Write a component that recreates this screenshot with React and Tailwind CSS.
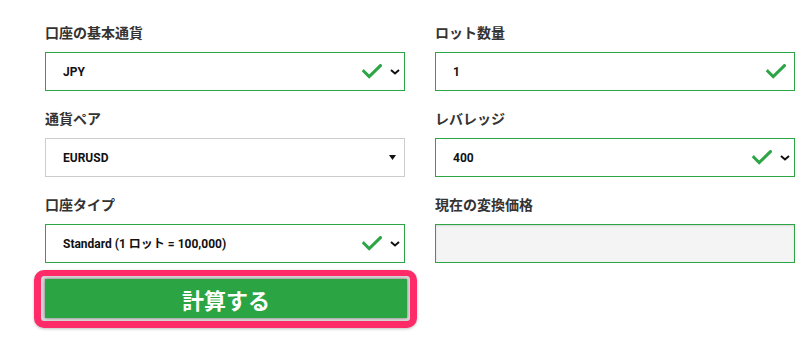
import { useState } from "react"

const labelCls =
	"block text-sm leading-5 font-bold text-[#333] mb-[10px] [font-family:'Noto_Sans_CJK_JP',sans-serif]"
const valueCls =
	"text-[12px] font-bold text-[#111] [font-family:Roboto,'Noto_Sans_CJK_JP',sans-serif]"

function Check() {
	return (
		<svg width="20" height="15" viewBox="0 0 20 15" fill="none" aria-hidden="true">
			<path
				d="M1.8 7.2l5.4 5.4L18.4 1.6"
				stroke="#2ca544"
				strokeWidth="3"
				strokeLinecap="square"
			/>
		</svg>
	)
}

function Chevron() {
	return (
		<svg width="10" height="6" viewBox="0 0 10 6" fill="none" aria-hidden="true">
			<path d="M1 1l4 3.5L9 1" stroke="#111" strokeWidth="2" />
		</svg>
	)
}

function Caret() {
	return (
		<svg width="7" height="5" viewBox="0 0 7 5" aria-hidden="true">
			<path d="M0 0h7L3.5 5z" fill="#111" />
		</svg>
	)
}

function Field({ label, children, className = "" }) {
	return (
		<div className="mb-[17px]">
			<span className={labelCls}>{label}</span>
			<div className={`h-[39px] flex items-center pl-[17px] ${className}`}>{children}</div>
		</div>
	)
}

export default function App() {
	const [lot] = useState("1")

	return (
		<div className="w-[810px] h-[337px] bg-white overflow-hidden pt-[22px] pl-[45px]">
			<div className="grid grid-cols-[360px_360px] gap-x-[30px]">
				<div>
					<Field label="口座の基本通貨" className="border border-[#2ca544] pr-[4px]">
						<span className={`${valueCls} flex-1`}>JPY</span>
						<Check />
						<span className="ml-[8px]">
							<Chevron />
						</span>
					</Field>
					<Field label="通貨ペア" className="border border-[#cccccc] pr-[8px]">
						<span className={`${valueCls} flex-1`}>EURUSD</span>
						<Caret />
					</Field>
					<Field label="口座タイプ" className="border border-[#2ca544] pr-[4px]">
						<span className={`${valueCls} flex-1`}>Standard (1 ロット = 100,000)</span>
						<Check />
						<span className="ml-[8px]">
							<Chevron />
						</span>
					</Field>
				</div>
				<div>
					<Field label="ロット数量" className="border border-[#2ca544] pr-[8px]">
						<span className={`${valueCls} flex-1`}>{lot}</span>
						<Check />
					</Field>
					<Field label="レバレッジ" className="border border-[#2ca544] pr-[4px]">
						<span className={`${valueCls} flex-1`}>400</span>
						<Check />
						<span className="ml-[8px]">
							<Chevron />
						</span>
					</Field>
					<Field
						label="現在の変換価格"
						className="border border-[#2ca544] bg-[#f4f4f4] shadow-[inset_0_1px_2px_rgba(0,0,0,0.12)]"
					/>
				</div>
			</div>
			<div className="-mt-[10px] -ml-[11px] w-[383px] border-[7px] border-t-[6px] border-[#ff2a68] rounded-[10px] bg-[#d8d8d8] p-[3px] pl-[4px] shadow-[0_1px_3px_rgba(0,0,0,0.25)]">
				<button className="w-full h-[39px] bg-[#2ba543] text-white text-[22px] font-bold shadow-[0_0_3px_rgba(0,0,0,0.45)] [font-family:'Noto_Sans_CJK_JP',sans-serif] leading-none">
					計算する
				</button>
			</div>
		</div>
	)
}
